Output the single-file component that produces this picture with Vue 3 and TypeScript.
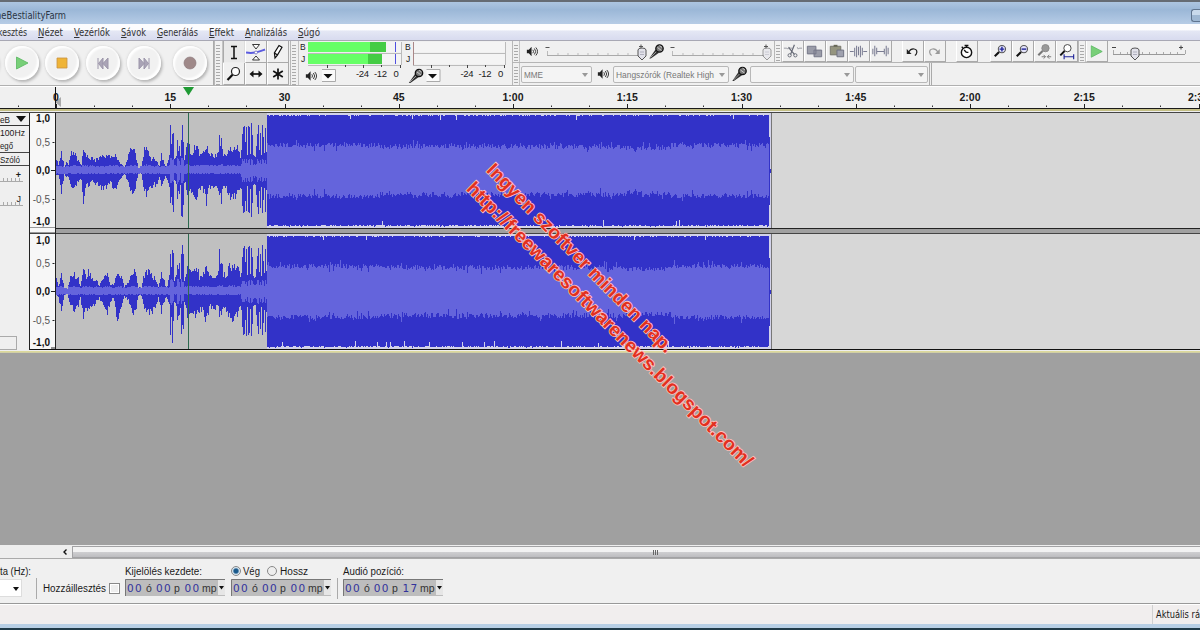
<script setup lang="ts">
import { h } from 'vue'

interface FitProps { text: string; w: number; size?: number; accel?: boolean; height?: number; base?: number }

// Single line of text fitted to a fixed width
const Fit = (p: FitProps) =>
  h('svg', { width: p.w, height: p.height ?? 12, style: { overflow: 'visible', display: 'block', flex: 'none' } }, [
    h('text', { x: 0, y: p.base ?? 9.5, fill: 'currentColor', 'font-size': p.size ?? 10, textLength: p.w, lengthAdjust: 'spacingAndGlyphs' }, p.text),
    p.accel ? h('path', { d: 'M0 11.500h5.500', stroke: 'currentColor', 'stroke-width': 1 }) : null
  ])
Fit.props = ['text', 'w', 'size', 'accel', 'height', 'base']

const menu = [
  { t: 'Nézet', w: 25 }, { t: 'Vezérlők', w: 36 }, { t: 'Sávok', w: 25 }, { t: 'Generálás', w: 41 },
  { t: 'Effekt', w: 25 }, { t: 'Analizálás', w: 42 }, { t: 'Súgó', w: 22 }
]
const transport = ['play', 'stop', 'prev', 'next', 'rec']
const tools = ['ibeam', 'envelope', 'pencil', 'zoom', 'shift', 'multi']
const editing = [['cut', 'copy', 'paste', 'trim', 'silence'], ['undo', 'redo'], ['timer'], ['zin', 'zout', 'zsel', 'zfit']]
const rulerLabels = ['0', '15', '30', '45', '1:00', '1:15', '1:30', '1:45', '2:00', '2:15', '2:30']
const pitch = 114.25
const minor: number[] = []
for (let i = -1; i < 31; i++) if (i % 3 !== 0) minor.push(Math.round(56 + (i * pitch) / 3))

type Key = [number, number, number]
const peaks: Key[] = [
  [169, 14, 14], [170, 42, 40], [171, 30, 30], [172, 43, 42], [173, 36, 34], [174, 12, 10], [176, 14, 12], [177, 26, 28], [178, 20, 24], [179, 24, 22],
  [180, 14, 14], [181, 34, 38], [182, 42, 41], [183, 36, 40], [184, 12, 12], [186, 20, 16], [187, 30, 22], [190, 19, 20],
  [193, 18, 21], [196, 28, 24], [199, 14, 18], [203, 18, 19], [206, 24, 30], [209, 15, 15], [215, 14, 15], [218, 18, 17], [219, 36, 22],
  [220, 24, 20], [221, 30, 28], [223, 17, 15], [226, 16, 17], [229, 24, 25], [233, 23, 25], [238, 23, 21], [240, 13, 14]
]
const quietA: Key[] = [
  [56, 12, 5], [58, 5, 5], [60, 12, 14], [61, 18, 20], [64, 3, 4], [66, 8, 6], [68, 6, 6], [71, 16, 14], [75, 16, 17], [79, 7, 8], [81, 6, 9], [83, 23, 28],
  [86, 13, 16], [90, 12, 12], [95, 11, 12], [100, 13, 17], [105, 15, 17], [110, 12, 11], [115, 15, 21], [119, 9, 9], [124, 3, 3],
  [128, 14, 13], [131, 23, 21], [135, 16, 16], [138, 3, 3], [141, 4, 3], [144, 22, 20], [147, 19, 24], [151, 12, 16], [156, 10, 13],
  [159, 5, 8], [161, 15, 13], [165, 4, 6], [168, 10, 11], ...peaks
]
const quietB: Key[] = [
  [56, 12, 4], [58, 5, 5], [61, 17, 18], [64, 3, 3], [67, 3, 3], [70, 14, 12], [73, 16, 17], [77, 15, 16], [80, 5, 6], [83, 20, 23],
  [86, 13, 16], [88, 19, 17], [92, 13, 15], [96, 10, 10], [99, 6, 6], [103, 14, 15], [107, 17, 21], [110, 7, 9], [113, 6, 6],
  [117, 20, 26], [120, 16, 17], [124, 5, 5], [128, 9, 9], [132, 20, 18], [135, 18, 22], [138, 4, 4], [141, 4, 4], [144, 17, 15],
  [148, 20, 20], [152, 16, 19], [156, 11, 13], [158, 4, 5], [161, 19, 19], [163, 12, 12], [166, 4, 6], [168, 10, 10], ...peaks
]
const burst = [20, 36, 45, 44, 30, 44, 16, 44, 45, 18, 46, 34, 15, 14, 14, 24, 36, 45, 20, 38, 16, 45, 32, 18, 42, 20]

function noise(seed: number) {
  let s = seed
  return () => {
    s = (s * 1664525 + 1013904223) % 4294967296
    return s / 4294967296
  }
}
function at(keys: Key[], x: number, k: 1 | 2) {
  for (let i = 1; i < keys.length; i++) {
    const a = keys[i - 1], b = keys[i]
    if (x <= b[0]) return a[k] + ((b[k] - a[k]) * (x - a[0])) / (b[0] - a[0])
  }
  return keys[keys.length - 1][k]
}
function channel(keys: Key[], c: number, seed: number) {
  const r = noise(seed)
  let outer = '', inner = ''
  for (let x = 56; x < 769; x++) {
    let u: number, d: number, iu: number, id: number
    if (x < 241) {
      u = at(keys, x, 1) * (0.8 + r() * 0.42)
      d = at(keys, x, 2) * (0.8 + r() * 0.42)
      iu = Math.min(u, 3 + r() * 1.6 + u * 0.07)
      id = Math.min(d, 2.5 + r() * 1.2)
      if (x > 169 && x < 185 && u > 18) { iu = 9 + r() * 4; id = iu }
    } else if (x < 267) {
      u = burst[x - 241] * (0.94 + r() * 0.1)
      d = burst[x - 241] * (0.92 + r() * 0.1)
      iu = 5 + r() * 3 + (u > 30 ? 4 : 0)
      id = iu
    } else {
      u = 56 - r() * 1.2 - (r() > 0.985 ? 4 : 0)
      d = 56 - r() * 1.6 - (r() > 0.985 ? 5 : 0)
      const spike = r() > 0.86 ? (r() - 0.5) * 10 : 0
      const level = x > 670 ? 25.5 : x > 625 ? 22.5 : x < 380 ? 25.5 : 24
      iu = level + (r() - 0.5) * 5 + spike
      id = level + (r() - 0.5) * 5 + spike
    }
    outer += `M${x} ${(c - u).toFixed(1)}h1V${(c + d).toFixed(1)}h-1z`
    inner += `M${x} ${(c - iu).toFixed(1)}h1V${(c + id).toFixed(1)}h-1z`
  }
  outer += `M769 ${c - 34}h1v68h-1zM770 ${c - 2}h1v4h-1z`
  return { c, outer, inner }
}
const channels = [channel(quietA, 170.5, 77), channel(quietB, 291.5, 4211)]
const scale = [
  { t: '1,0', y: 122, b: true }, { t: '0,5', y: 146, b: false }, { t: '0,0', y: 174, b: true }, { t: '-0,5', y: 203, b: false }, { t: '-1,0', y: 225, b: true },
  { t: '1,0', y: 243.5, b: true }, { t: '0,5', y: 267, b: false }, { t: '0,0', y: 295, b: true }, { t: '-0,5', y: 324, b: false }, { t: '-1,0', y: 346, b: true }
]
const times = ['00', '00', '17']
</script>

<template>
  <div class="window">
    <svg class="defs" width="0" height="0">
      <defs>
        <symbol id="speaker" viewBox="0 0 14 14"><path d="M1 5h2.300L6.500 1.500v11L3.300 9H1z" fill="#222" /><path d="M8 5q1.500 2 0 4M9.800 3.500q3 3.500 0 7M11.500 2.300q4 4.700 0 9.400" fill="none" stroke="#333" stroke-width="1.100" /></symbol>
        <symbol id="mic" viewBox="0 0 16 16"><path d="M.8 15 7 6l3.500 3.200L2.300 15z" fill="#333" /><path d="M2 14 8 8" stroke="#999" /><circle cx="11" cy="5" r="3.700" fill="#777" stroke="#111" stroke-width="1.300" /><path d="m9 4 4 3M11 2l2.500 2" stroke="#ddd" stroke-width=".8" /></symbol>
        <symbol id="play" viewBox="0 0 22 22"><path d="M5.500 5 17 11 5.500 17z" fill="#78cf78" stroke="#58b660" stroke-width=".8" /></symbol>
        <symbol id="stop" viewBox="0 0 22 22"><path d="M6 6h10v10H6z" fill="#efb437" stroke="#c99342" stroke-width=".8" /></symbol>
        <symbol id="prev" viewBox="0 0 22 22"><path d="M6 6v11M11 6v11L6.500 11.500zM16 6v11l-5-5.500z" fill="#aaa4b6" stroke="#9c96aa" stroke-width="1" /></symbol>
        <symbol id="next" viewBox="0 0 22 22"><path d="M16 6v11M11 6v11l4.500-5.500zM6 6v11l5-5.500z" fill="#aaa4b6" stroke="#9c96aa" stroke-width="1" /></symbol>
        <symbol id="rec" viewBox="0 0 22 22"><circle cx="11" cy="11" r="6" fill="#9f8989" stroke="#8c7a7c" stroke-width=".7" /></symbol>
        <symbol id="ibeam" viewBox="0 0 22 22"><path d="M8 5.500h6M8 17.500h6M11 5.500v12" stroke="#111" stroke-width="1.500" /></symbol>
        <symbol id="envelope" viewBox="0 0 22 22"><path d="M1 11.500c7 1.500 12-.5 19-3" fill="none" stroke="#5b5be0" stroke-width="2" /><path d="M7.500 3.500h7L11 8zM7.500 19h7L11 15z" fill="#fff" stroke="#222" stroke-width=".9" /><circle cx="11" cy="11.500" r="1.500" fill="#fff" stroke="#66b" stroke-width=".7" /></symbol>
        <symbol id="pencil" viewBox="0 0 22 22"><path d="m8 17-.6-5 4.600-7.500 3 1.800-4.600 7.800zM7.500 12l3 2" fill="#fff" stroke="#111" stroke-width="1.200" /></symbol>
        <symbol id="zoom" viewBox="0 0 22 22"><circle cx="12.500" cy="8.500" r="4" fill="#fff" stroke="#222" stroke-width="1.200" /><path d="M9.500 11.800 4.500 17" stroke="#111" stroke-width="2.200" /></symbol>
        <symbol id="shift" viewBox="0 0 22 22"><path d="M6 11h10" stroke="#111" stroke-width="1.700" /><path d="m4.500 11 4-3.500v7zM17.500 11l-4-3.500v7z" fill="#111" /></symbol>
        <symbol id="multi" viewBox="0 0 22 22"><path d="M11 5.500v11M6.200 8l9.600 6M6.200 14l9.600-6" stroke="#111" stroke-width="1.700" /></symbol>
        <symbol id="cut" viewBox="0 0 22 22"><path d="M2 7.500h3l1 1 1-2 2 1h2m5-1 1 2 1-1h3" fill="none" stroke="#8c8f98" stroke-width=".9" /><path d="m13 4-4 10m-2-7 6 7" stroke="#666a76" stroke-width="1.300" /><circle cx="8" cy="15" r="1.700" fill="none" stroke="#666a76" /><circle cx="14" cy="15" r="1.700" fill="none" stroke="#666a76" /></symbol>
        <symbol id="copy" viewBox="0 0 22 22"><path d="M3.500 5.500h9v8h-9zM10.500 9.500h8v7h-8z" fill="#9a9ca8" stroke="#737686" /></symbol>
        <symbol id="paste" viewBox="0 0 22 22"><path d="M4.500 5.500h11v9h-11z" fill="#95957f" stroke="#74746a" /><path d="M8 4h4v2H8z" fill="#676754" /><path d="M11.500 9.500h7v7h-7z" fill="#9fa1ae" stroke="#6d7080" /></symbol>
        <symbol id="trim" viewBox="0 0 22 22"><path d="M2 11h4m10 0h4M7 7v9m2-11v12m2-11v9m2-10v12m2-10v8" stroke="#7a7c92" stroke-width="1.100" /></symbol>
        <symbol id="silence" viewBox="0 0 22 22"><path d="M3 8v6m2-9v11m2-9v7m0-3h8M15 8v6m2-9v11m2-9v7" stroke="#7a7c92" stroke-width="1.100" /></symbol>
        <symbol id="undo" viewBox="0 0 22 22"><path d="M7 11.500c3-5 9-3.500 8.500.5-.2 1.500-1 2.500-2 3.200" fill="none" stroke="#222" stroke-width="1.300" /><path d="M5 8.500v5h5z" fill="#222" /></symbol>
        <symbol id="redo" viewBox="0 0 22 22"><path d="M14.500 11.500c-3-5-9-3.500-8.500.5.2 1.500 1 2.500 2 3.200" fill="none" stroke="#999" stroke-width="1.300" /><path d="M16.500 8.500v5h-5z" fill="#999" /></symbol>
        <symbol id="timer" viewBox="0 0 22 22"><circle cx="11" cy="12" r="5.400" fill="#fff" stroke="#111" stroke-width="1.500" /><path d="M9 4.700h4M11 5v2M11 12 8.500 9.500M11 12h2M6 6l1.300 1.300" stroke="#111" stroke-width="1.400" /></symbol>
        <symbol id="glass" viewBox="0 0 22 22"><circle cx="12.500" cy="8.500" r="3.800" fill="#e3e3fa" stroke="#555" stroke-width="1.100" /><path d="M9.500 11.500 5 16" stroke="#111" stroke-width="2.200" /></symbol>
        <symbol id="zin" viewBox="0 0 22 22"><use href="#glass" width="22" height="22" /><path d="M10 8.500h5M12.500 6v5" stroke="#22269a" stroke-width="1.500" /></symbol>
        <symbol id="zout" viewBox="0 0 22 22"><use href="#glass" width="22" height="22" /><path d="M10 8.500h5" stroke="#22269a" stroke-width="1.500" /></symbol>
        <symbol id="zsel" viewBox="0 0 22 22"><circle cx="12" cy="7.500" r="3.800" fill="#999" stroke="#888" /><path d="M9 10.500 4.500 15" stroke="#777" stroke-width="2.200" /><path d="M8 16.500h4m2 0h4M10 14.500l2 2-2 2m6-4-2 2 2 2" fill="none" stroke="#777" /></symbol>
        <symbol id="zfit" viewBox="0 0 22 22"><circle cx="12" cy="7.500" r="3.800" fill="#fff" stroke="#444" /><path d="M9 10.500 4.500 15" stroke="#111" stroke-width="2" /><path d="M8.500 16.500h10M8.500 14v5m10-5v5" stroke="#22269a" stroke-width="1.200" /></symbol>
        <symbol id="thumb" viewBox="0 0 10 15"><path d="M1 4q0-2 4-2t4 2v6l-4 4-4-4z" fill="#e2e2ea" stroke="#555" /><path d="M3 6h4M3 8.500h4" stroke="#9a9aaa" stroke-width=".7" /></symbol>
      </defs>
    </svg>

    <header class="title">
      <Fit text="neBestialityFarm" :w="70" :size="9.800" />
      <i class="winbtn"></i>
    </header>
    <nav class="menu">
      <Fit text="kesztés" :w="29" :size="9.800" class="m-cut" />
      <Fit v-for="m in menu" :key="m.t" :text="m.t" :w="m.w" :size="9.800" :accel="true" />
    </nav>

    <section class="toolbars">
      <div class="transport">
        <div class="round part"></div>
        <div v-for="t in transport" :key="t" class="round" :class="t"><svg width="22" height="22"><use :href="'#' + t" /></svg></div>
      </div>
      <i class="grip tall"></i>
      <div class="tools">
        <span v-for="t in tools" :key="t" class="btn" :class="{ on: t === 'ibeam' }"><svg width="22" height="22"><use :href="'#' + t" /></svg></span>
      </div>
      <i class="grip tall g2"></i>
      <svg class="meters" width="213" height="45" viewBox="299 41 213 45">
        <g font-size="8.500">
          <text x="300" y="50">B</text><text x="301" y="62">J</text><text x="405" y="50">B</text><text x="406" y="62">J</text>
        </g>
        <g shape-rendering="crispEdges">
          <path d="M308 42h93v10h-93zM308 54h93v10h-93zM413 42h92v10h-92zM413 54h92v10h-92z" fill="#f4f4f4" />
          <path d="M308 53h93M413 53h92M308 65h93M413 65h92M401 42v23M505 42v23" stroke="#bbb" />
          <path d="M308 42h62v10h-62zM308 54h60v10h-60z" fill="#66ff66" />
          <path d="M370 42h16v10h-16zM368 54h14v10h-14z" fill="#44cc44" />
          <path d="M395 42h1v10h-1zM395 54h1v10h-1z" fill="#5050e0" />
          <path d="M413.500 42v23" stroke="#a88" />
          <path d="M327.500 65v3M363.500 65v3M400.500 65v3M431.500 65v3M467.500 65v3M504.500 65v3M345.500 65v2M381.500 65v2M449.500 65v2M485.500 65v2" stroke="#444" />
        </g>
        <g font-size="9.500">
          <text x="356" y="76.500" textLength="13">-24</text><text x="374" y="76.500" textLength="13">-12</text><text x="393.500" y="76.500">0</text>
          <text x="460.500" y="76.500" textLength="13">-24</text><text x="478.500" y="76.500" textLength="13">-12</text><text x="498" y="76.500">0</text>
        </g>
        <path d="M322 69.500h13.500V81.500H322M426.500 69.500H440V81.500H426.500" fill="#fafafa" stroke="#aaa" />
        <path d="M323.500 74h9l-4.500 4.500zM428 74h9l-4.500 4.500z" fill="#111" />
        <use href="#speaker" x="305" y="70" width="12" height="12" /><use href="#mic" x="408" y="68" width="16" height="16" />
      </svg>
      <div class="right">
        <div class="bar">
          <i class="grip"></i>
          <svg width="254" height="21" viewBox="520 41 254 21">
            <use href="#speaker" x="526" y="45.500" width="12" height="12" />
            <path d="M547 55.500h92M672 55.500h92" stroke="#aaa" /><path d="M547.500 51v4m10.500-2v2m10-2v2m10-2v2m10-2v2m10-2v2m10-2v2m10-2v2m10-2v2M672.500 51v4m10.500-2v2m10-2v2m10-2v2m10-2v2m10-2v2m10-2v2m10-2v2m10-2v2" stroke="#bbb" />
            <path d="M545.500 47.500h4M670.500 47.500h4M639 46.500h4m-2-2v4M764 46.500h4m-2-2v4" stroke="#555" />
            <use href="#thumb" x="637" y="46" width="10" height="15" /><use href="#thumb" x="762" y="46" width="10" height="15" opacity=".55" />
            <use href="#mic" x="648" y="43.500" width="17" height="16" />
          </svg>
          <i class="grip"></i>
          <div v-for="(g, i) in editing" :key="i" class="group" :class="'e' + i">
            <span v-for="b in g" :key="b" class="btn"><svg width="21" height="21"><use :href="'#' + b" /></svg></span>
          </div>
          <i class="grip"></i>
          <span class="btn"><svg width="21" height="21"><use href="#play" /></svg></span>
          <svg width="88" height="21" viewBox="1109 41 88 21">
            <path d="M1114 54.500h72" stroke="#999" /><path d="M1114.500 50v4m7-2v2m7-2v2m7-2v2m8-2v2m7-2v2m7-2v2m7-2v2m7-2v2m7-2v2m8-4v4" stroke="#aaa" />
            <path d="M1113 47.500h4M1180 47.500h4m-2-2v4" stroke="#444" /><use href="#thumb" x="1131" y="46" width="10" height="15" />
          </svg>
        </div>
        <div class="bar low">
          <i class="grip"></i>
          <div class="select s1"><Fit text="MME" :w="19" :size="9.500" /></div>
          <svg class="ic1" width="12" height="12"><use href="#speaker" /></svg>
          <div class="select s2"><Fit text="Hangszórók (Realtek High" :w="98" :size="9.500" /></div>
          <svg class="ic2" width="17" height="16"><use href="#mic" /></svg>
          <div class="select s3"></div>
          <div class="select s4"></div>
          <i class="endline"></i>
        </div>
      </div>
    </section>

    <svg class="ruler" width="1200" height="27" viewBox="0 86 1200 27">
      <path d="M0 86.500H1200" stroke="#fff" />
      <path d="M61 97v10l-6-5z" fill="#aaa" />
      <g font-size="10.500" font-weight="bold" text-anchor="middle">
        <text v-for="(l, i) in rulerLabels" :key="l" :x="56 + i * pitch" y="101.300">{{ l }}</text>
      </g>
      <path d="M55.500 87V108" stroke="#111" />
      <path v-for="(l, i) in rulerLabels" :key="'t' + l" :d="`M${Math.round(56 + i * pitch) + 0.5} 104v4`" stroke="#222" />
      <path v-for="m in minor" :key="m" :d="`M${m + 0.5} 105.500v1.500`" stroke="#333" />
      <path d="M183 87h11l-5.500 8.500z" fill="#1f9a34" />
      <path d="M0 108h1200v1H0z" fill="#1a1a1a" /><path d="M0 109h1200v2H0z" fill="#c4bf86" /><path d="M0 111h1200v1H0z" fill="#eee" /><path d="M0 112h1200v1H0z" fill="#444" />
    </svg>

    <section class="track">
      <aside class="panel">
        <div class="name"><Fit text="eB" :w="10" :size="9.500" /><svg width="11" height="6"><path d="M0 0h10L5 6z" fill="#111" /></svg></div>
        <Fit text="100Hz" :w="25" :size="9.500" /><Fit text="egő" :w="13" :size="9.500" class="row2" />
        <div class="solo"><Fit text="Szóló" :w="20" :size="9.500" /></div>
        <div class="sl"><b>+</b></div>
        <div class="sl two"><b>J</b></div>
        <div class="fold"></div>
      </aside>
      <svg width="1170" height="237" viewBox="30 113 1170 237">
        <path d="M30 113h26v237H30z" fill="#f7f7f7" />
        <path d="M56 113h716v237H56z" fill="#c0c0c0" /><path d="M771 113h429v237H771z" fill="#d7d7d7" />
        <path d="M267 113h504v237H267z" fill="#d2d2ea" />
        <g v-for="c in channels" :key="c.c" shape-rendering="crispEdges"><path :d="c.outer" fill="#3232c8" /><path :d="c.inner" fill="#6464dc" /></g>
        <path d="M771.500 113v237" stroke="#777" /><path d="M188.500 113v237" stroke="#2d6a4f" />
        <path d="M30 228h1170v1H30z" fill="#222" /><path d="M30 229h1170v4H30z" fill="#a0a0a0" /><path d="M30 233h1170v1H30z" fill="#444" />
        <path d="M30 228h25v5H30z" fill="#f7f7f7" /><path d="M30 227.500h25M30 232.500h25" stroke="#999" />
        <path d="M55.500 113v237" stroke="#222" />
        <path d="M52.500 142.500h2M51 170.500h4M52.500 199.500h2M52.500 263.500h2M51 291.500h4M52.500 320.500h2M51 348h4" stroke="#222" />
        <g class="scale" font-size="10" text-anchor="end"><text v-for="s in scale" :key="s.y" x="50" :y="s.y" :class="{ strong: s.b }">{{ s.t }}</text></g>
        <path d="M30 349h1170v1H30z" fill="#111" />
      </svg>
    </section>
    <div class="edge"></div>
    <main class="empty"></main>

    <div class="scroll">
      <svg width="72" height="14"><path d="M66.500 4.500 64 7l2.500 2.500" fill="none" stroke="#111" stroke-width="1.400" /></svg>
      <div class="thumbbar"><i></i><i></i><i></i></div>
    </div>

    <footer class="selection">
      <div class="col rate"><div class="lab"><Fit text="ta (Hz):" :w="31" /></div><div class="combo"></div></div>
      <i class="sep"></i>
      <div class="snap"><Fit text="Hozzáillesztés" :w="63" /><i class="check"></i></div>
      <div class="col c1">
        <div class="lab"><Fit text="Kijelölés kezdete:" :w="77" /></div>
        <svg width="100" height="17"><path d="M0 0h100v17H0z" fill="#bdbdbd" /><path d="M.5 17V.5H100" fill="none" stroke="#777" /><g class="digits"><text x="2" y="13">00</text><text x="31" y="13">00</text><text x="59.500" y="13">00</text></g><g class="units"><text x="21" y="13">ó</text><text x="49" y="13">p</text><text x="77" y="13">mp</text></g><path d="M93 1h7v15h-7z" fill="#e6e6e6" /><path d="M94 7h5l-2.500 3.500z" fill="#111" /></svg>
      </div>
      <div class="col c2">
        <div class="lab"><i class="radio on"></i><Fit text="Vég" :w="17" /><i class="radio r2"></i><Fit text="Hossz" :w="28" /></div>
        <svg width="100" height="17"><path d="M0 0h100v17H0z" fill="#bdbdbd" /><path d="M.5 17V.5H100" fill="none" stroke="#777" /><g class="digits"><text x="2" y="13">00</text><text x="31" y="13">00</text><text x="59.500" y="13">00</text></g><g class="units"><text x="21" y="13">ó</text><text x="49" y="13">p</text><text x="77" y="13">mp</text></g><path d="M93 1h7v15h-7z" fill="#e6e6e6" /><path d="M94 7h5l-2.500 3.500z" fill="#111" /></svg>
      </div>
      <i class="sep sp2"></i>
      <div class="col c3">
        <div class="lab"><Fit text="Audió pozíció:" :w="61" /></div>
        <svg width="100" height="17"><path d="M0 0h100v17H0z" fill="#bdbdbd" /><path d="M.5 17V.5H100" fill="none" stroke="#777" /><g class="digits"><text v-for="(t, i) in times" :key="i" :x="2 + i * 28.700" y="13">{{ t }}</text></g><g class="units"><text x="21" y="13">ó</text><text x="49" y="13">p</text><text x="77" y="13">mp</text></g><path d="M93 1h7v15h-7z" fill="#e6e6e6" /><path d="M94 7h5l-2.500 3.500z" fill="#111" /></svg>
      </div>
    </footer>
    <div class="status"><div class="cell"><Fit text="Aktuális rá" :w="44" :size="9.800" /></div></div>
    <div class="frame"></div>

    <svg class="watermark" width="1200" height="630">
      <text transform="translate(485.500 171) rotate(45.400)" textLength="257" lengthAdjust="spacingAndGlyphs">Ingyen szoftver minden nap.</text>
      <text transform="translate(465.500 189.500) rotate(44.900)" textLength="395" lengthAdjust="spacingAndGlyphs">http://freewaresoftwarenews.blogspot.com/</text>
    </svg>
  </div>
</template>

<style scoped>
.window { position: relative; width: 1200px; height: 630px; overflow: hidden; display: flex; flex-direction: column; background: #f0f0f0; color: #1a1a1a; font-family: "Liberation Sans", Arial, sans-serif; }
.window > * { flex: none; }
.window svg { display: block; flex: none; }
.window svg text { fill: currentColor; }
.window .defs { position: absolute; }
.title, .menu { font-family: "DejaVu Sans Condensed", "DejaVu Sans", sans-serif; }
.title { height: 24px; box-sizing: border-box; border-top: 2px solid #656b73; background: linear-gradient(#adc5e0, #9bb7d7 35%, #b6cce6); display: flex; align-items: flex-start; justify-content: space-between; padding-top: 7px; color: #2a3644; }
.title > svg { margin-left: -4px; }
.winbtn { width: 8px; height: 11px; border: 1px solid #60758f; border-right: 0; border-radius: 3px 0 0 3px; background: linear-gradient(#c9daec 50%, #9fb8d3 50%); }
.menu { height: 17px; box-sizing: border-box; display: flex; gap: 11px; padding-top: 2px; color: #333; background: linear-gradient(#fcfcfe 0 35%, #e4e7f4 45%, #d8dbef); border-bottom: 1px solid #a8a8b4; }
.m-cut { margin-left: -2px; }
.toolbars { height: 45px; display: flex; box-sizing: border-box; border-bottom: 1px solid #b0b0b0; }
.transport { width: 214px; display: flex; align-items: center; border-right: 1px solid #aaa; box-sizing: border-box; overflow: hidden; }
.round { flex: none; width: 34px; height: 34px; border-radius: 50%; display: flex; align-items: center; justify-content: center; margin-right: 6.700px; background: #f1f1f1; box-shadow: inset 2px 2px 2px #fff, inset -2px -2px 2px #fff, 1.500px 2px 3px #b4b4b4, -1px -1px 2px #e4e4e4; }
.part { margin-left: -36px; }
.round.next { margin-right: 12px; }
.grip { flex: none; width: 8px; box-sizing: border-box; border-left: 1px solid #b8b8b8; border-right: 1px solid #c4c4c4; background: repeating-linear-gradient(#f0f0f0 0 2px, #aaa 2px 3px) 1px 2px / 4px 100% no-repeat content-box; }
.tall { width: 9px; }
.g2 { margin-left: 1px; }
.tools { display: grid; grid-template-columns: repeat(3, 22px); grid-template-rows: 22px 22px; }
.btn { display: block; box-sizing: border-box; border-right: 1px solid #a9a9a9; border-bottom: 1px solid #a9a9a9; border-left: 1px solid #fff; overflow: hidden; }
.btn > svg { margin-left: -1px; }
.btn.on { background: #e9e9e9; border-left-color: #aaa; border-right-color: #ddd; border-bottom-color: #eee; }
.right { flex: 1; min-width: 0; }
.bar { height: 22px; box-sizing: border-box; display: flex; border-bottom: 1px solid #b5b5b5; }
.group { display: flex; }
.group .btn, .bar > .btn { width: 22px; height: 21px; }
.e1 { margin-left: 10px; }
.e2 { margin-left: 10px; }
.e3 { margin: 0 0 0 12px; }
.bar.low { border: 0; align-items: center; }
.low .grip { align-self: stretch; margin-right: 1px; }
.select { height: 17px; box-sizing: border-box; border: 1px solid #b8b8b8; border-radius: 2px; background: #f4f4f4; color: #777; padding: 1px 0 0 2px; display: flex; justify-content: space-between; }
.select::after { content: ""; margin: 5px 3px 0 auto; width: 0; height: 0; border: 3px solid transparent; border-top: 4px solid #999; border-bottom: 0; }
.s1 { width: 71px; } .ic1 { margin: 0 4px 0 5px; } .s2 { width: 116px; } .ic2 { margin: 0 2px; } .s3 { width: 104px; } .s4 { width: 73px; margin-left: 1px; }
.endline { align-self: stretch; width: 1px; margin-left: 1px; border: solid #aaa; border-width: 0 1px; }
.track { height: 237px; display: flex; }
.panel { width: 30px; box-sizing: border-box; border-right: 1px solid #222; background: #efefef; display: flex; flex-direction: column; overflow: hidden; }
.name { height: 12px; display: flex; align-items: center; gap: 6px; border-bottom: 1px solid #333; margin-bottom: 0; }
.row2 { margin-top: 1px; }
.solo { height: 12px; margin-top: 1px; border-top: 1px solid #444; border-bottom: 1px solid #444; }
.sl { width: 23px; height: 13px; margin-top: 3px; border-bottom: 1px solid #aaa; text-align: right; font: 9px/12px "Liberation Sans", sans-serif; box-sizing: border-box; background: repeating-linear-gradient(90deg, transparent 0 3px, #aaa 3px 4px) 0 100% / 100% 3px no-repeat; }
.sl b { font-weight: bold; padding-right: 2px; }
.two { margin-top: 11px; }
.two b { font-weight: normal; }
.fold { margin-top: auto; width: 17px; height: 14px; box-sizing: border-box; border: 1px solid #aaa; border-left: 0; }
.scale { color: #555; }
.scale .strong { font-weight: bold; color: #111; }
.edge { height: 3px; background: linear-gradient(#eee 0 20%, #dcd99a 35% 75%, #bbb); }
.empty { height: 192px; background: #a0a0a0; }
.scroll { height: 14px; display: flex; background: #eee; border-bottom: 1px solid #aaa; box-sizing: border-box; }
.thumbbar { flex: 1; border: 1px solid #a2a2a4; border-right: 0; margin: 1px 0 0; background: linear-gradient(#f2f2f2 45%, #cfcfd1 50%, #bdbdc0); display: flex; gap: 1px; align-items: center; padding-left: 580px; }
.thumbbar i { width: 1px; height: 5px; border-left: 1px solid #666; box-sizing: border-box; }
.selection { height: 45px; display: flex; box-sizing: border-box; padding-top: 6px; border-bottom: 1px solid #999; }
.lab { height: 14px; display: flex; align-items: flex-start; white-space: nowrap; }
.rate { width: 36px; }
.combo { width: 22px; height: 18px; background: #fff; border: 1px solid #ddd; border-left: 0; box-sizing: border-box; display: flex; }
.combo::after { content: ""; border: 3px solid transparent; border-top: 4px solid #111; border-bottom: 0; width: 0; height: 0; margin: 7px 2px 0 auto; }
.sep { width: 1px; height: 21px; margin-top: 13px; background: #aaa; }
.snap { display: flex; height: 14px; margin: 16px 0 0 6px; gap: 3px; align-items: center; }
.check { width: 11px; height: 11px; box-sizing: border-box; border: 1px solid #888; background: #eee; box-shadow: inset 0 0 0 1px #fff; }
.c1 { margin-left: 5px; } .c2 { margin-left: 6px; } .c3 { margin-left: 5px; }
.sp2 { margin-left: 6px; }
.radio { width: 10px; height: 10px; box-sizing: border-box; border: 1px solid #888; border-radius: 50%; background: #eee; margin: 1px 2px 0 0; }
.radio.on { background: radial-gradient(#1b5a8c 0 35%, #d8e6f0 60%); }
.radio.r2 { margin-left: 7px; margin-right: 3px; }
.digits { color: #33339c; font: 10.500px "DejaVu Sans", sans-serif; letter-spacing: 1.400px; }
.units { color: #333; font-size: 10.500px; }
.status { height: 20px; background: #f1eeee; border-top: 1px solid #fff; box-sizing: border-box; display: flex; justify-content: flex-end; font-family: "DejaVu Sans Condensed", "DejaVu Sans", sans-serif; }
.cell { width: 48px; box-sizing: border-box; border-left: 1px solid #d0d0d0; padding: 3px 0 0 3px; overflow: hidden; }
.frame { height: 6px; box-sizing: border-box; background: #b8cfe5; border-bottom: 2px solid #213b49; }
.watermark { position: absolute; left: 0; top: 0; }
.window .watermark text { font: bold 19px "Liberation Sans", Arial, sans-serif; fill: #e2301f; stroke: #ffc4be; stroke-width: 1.600px; paint-order: stroke; }
</style>

<style>
html, body { margin: 0; overflow: hidden; }
</style>
